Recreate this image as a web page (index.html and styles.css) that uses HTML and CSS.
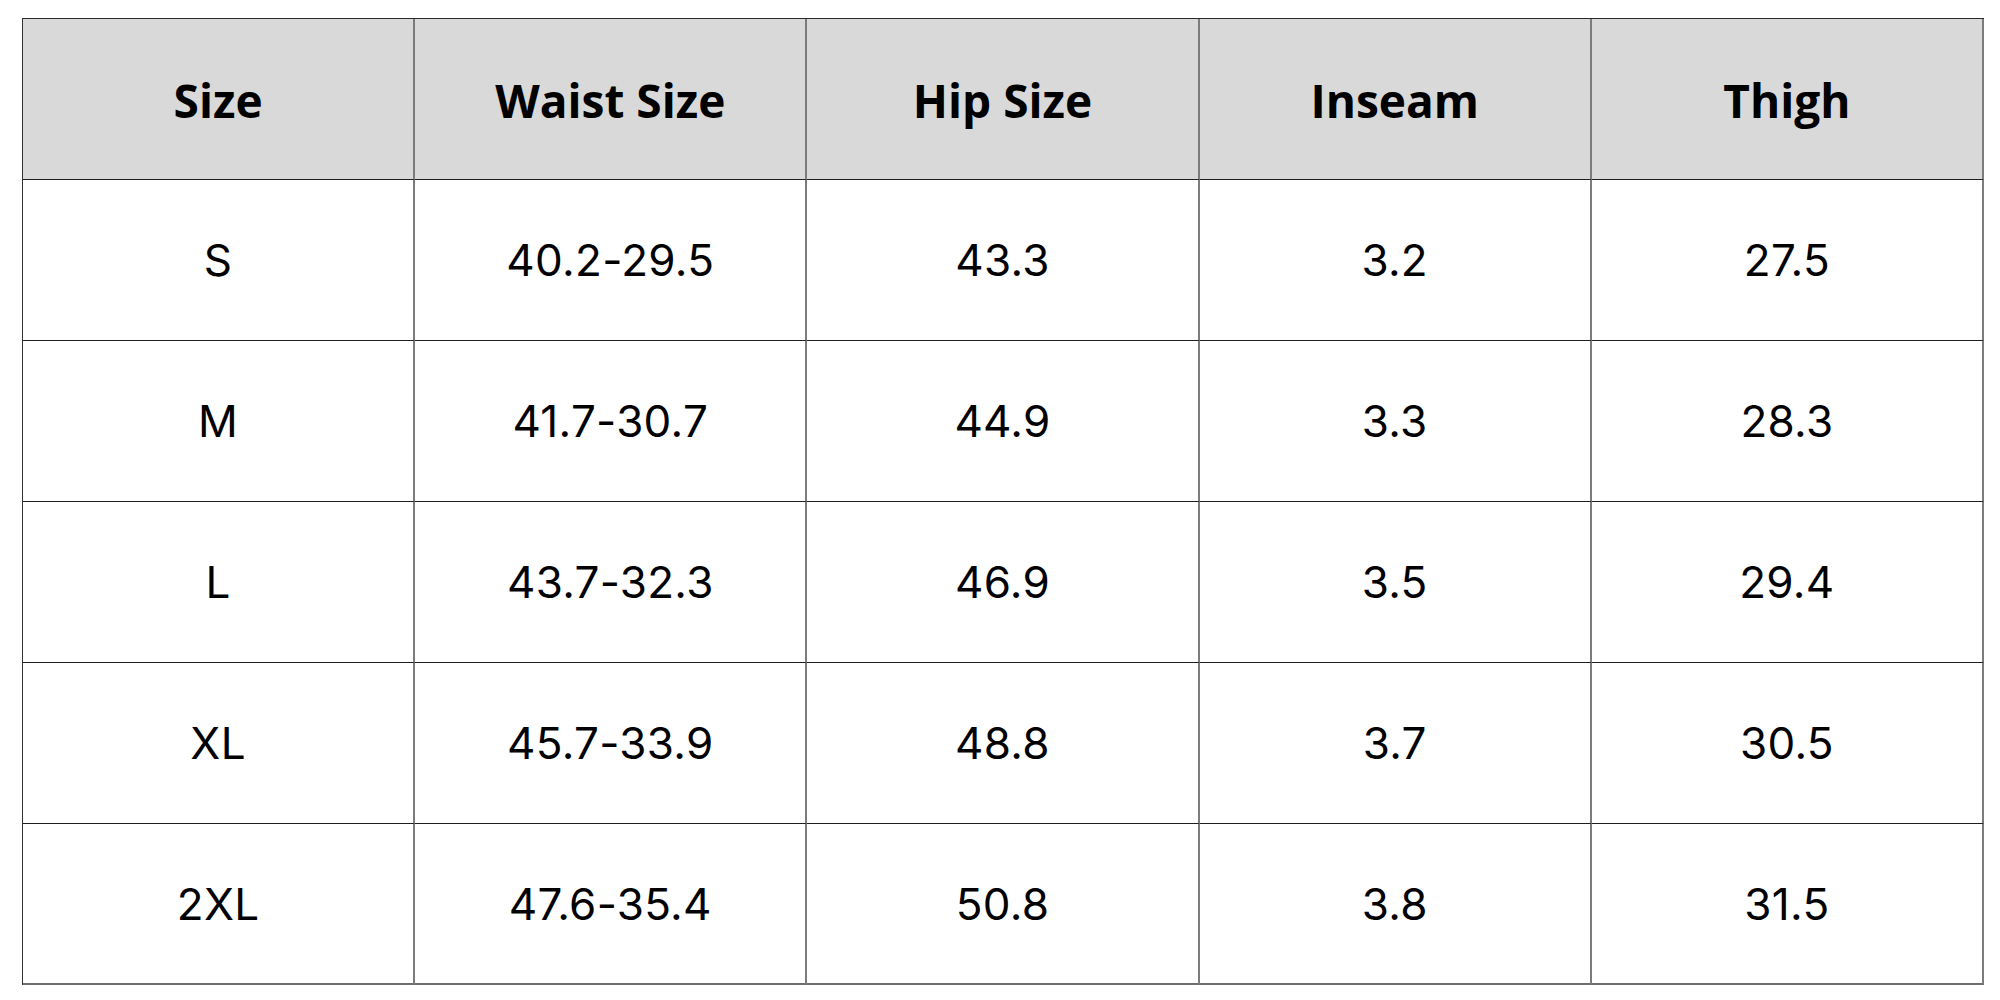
FILE: index.html
```html
<!DOCTYPE html>
<html>
<head>
<meta charset="utf-8">
<link rel="stylesheet" href="styles.css">
</head>
<body>
<div class="chart">
  <div class="cell head">Size</div>
  <div class="cell head">Waist Size</div>
  <div class="cell head">Hip Size</div>
  <div class="cell head">Inseam</div>
  <div class="cell head">Thigh</div>

  <div class="cell">S</div>
  <div class="cell">40.2-29.5</div>
  <div class="cell">43.3</div>
  <div class="cell">3.2</div>
  <div class="cell">27.5</div>

  <div class="cell">M</div>
  <div class="cell">41.7-30.7</div>
  <div class="cell">44.9</div>
  <div class="cell">3.3</div>
  <div class="cell">28.3</div>

  <div class="cell">L</div>
  <div class="cell">43.7-32.3</div>
  <div class="cell">46.9</div>
  <div class="cell">3.5</div>
  <div class="cell">29.4</div>

  <div class="cell">XL</div>
  <div class="cell">45.7-33.9</div>
  <div class="cell">48.8</div>
  <div class="cell">3.7</div>
  <div class="cell">30.5</div>

  <div class="cell last">2XL</div>
  <div class="cell last">47.6-35.4</div>
  <div class="cell last">50.8</div>
  <div class="cell last">3.8</div>
  <div class="cell last">31.5</div>
</div>
</body>
</html>
```

FILE: styles.css
```css
html, body {
  margin: 0;
  padding: 0;
  background: #ffffff;
}
body {
  padding: 18px 0 0 22px;
}
.chart {
  box-sizing: border-box;
  width: 1962px;
  display: grid;
  grid-template-columns: repeat(5, 1fr);
  grid-auto-rows: 161px;
  border-top: 1px solid #2a2a2a;
  border-left: 1px solid #333333;
  font-family: Inter, Roboto, "Liberation Sans", sans-serif;
  color: #000000;
}
.cell {
  box-sizing: border-box;
  display: flex;
  align-items: center;
  justify-content: center;
  border-right: 2px solid #7c7c7c;
  border-bottom: 1px solid #1e1e1e;
  font-size: 44px;
  font-weight: 400;
  letter-spacing: 0.3px;
}
.head {
  background: #d9d9d9;
  font-family: "Open Sans", "Liberation Sans", sans-serif;
  font-weight: 700;
  font-size: 46px;
  letter-spacing: 0;
  padding-top: 2px;
}
.last {
  border-bottom: 2px solid #6e6e6e;
}
```
